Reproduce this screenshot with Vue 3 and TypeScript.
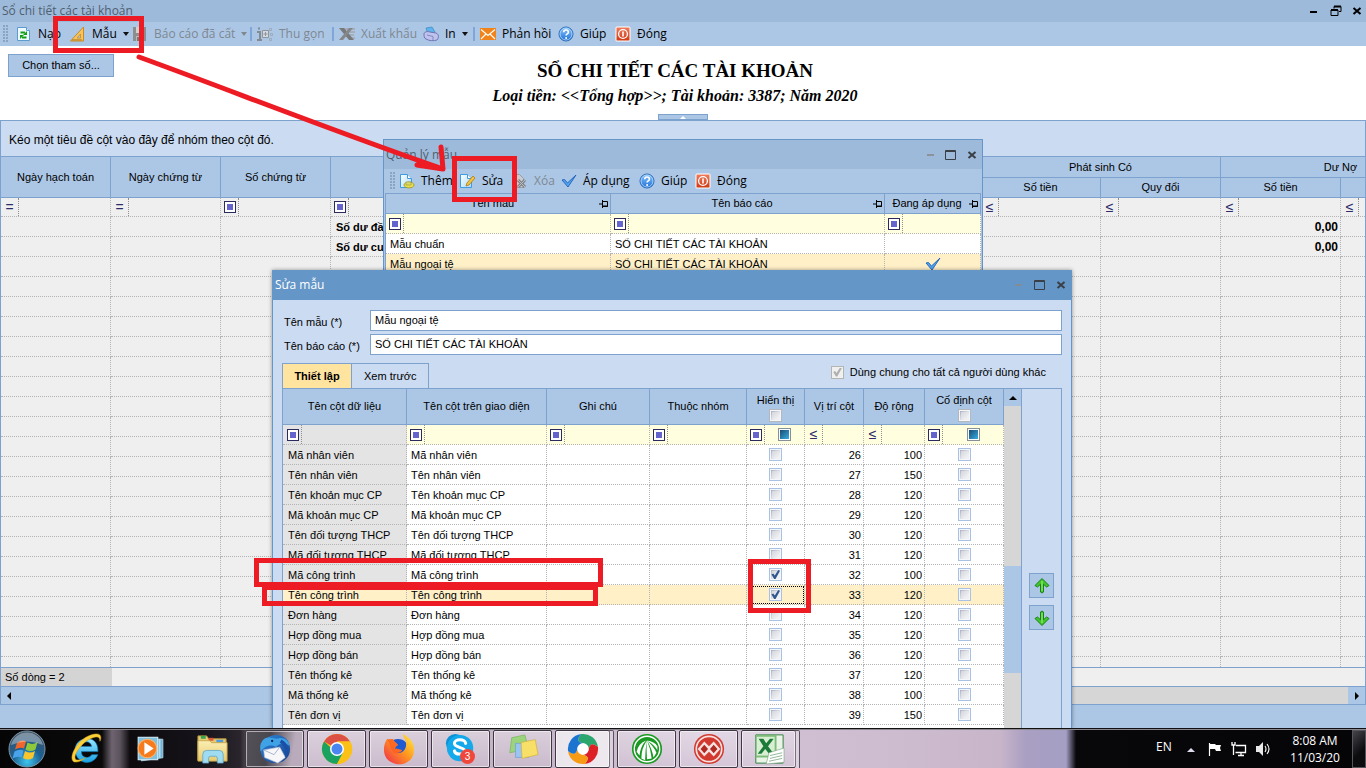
<script setup lang="ts">
interface Tool {
  icon: string
  label: string
  width: number
  menu?: boolean
  off?: boolean
  sep?: boolean
}

const mainTools: Tool[] = [
  { icon: 'refresh', label: 'Nạp', width: 54 },
  { icon: 'ruler', label: 'Mẫu', width: 62, menu: true },
  { icon: 'save', label: 'Báo cáo đã cất', width: 125, menu: true, off: true, sep: true },
  { icon: 'tree', label: 'Thu gọn', width: 82, off: true, sep: true },
  { icon: 'excel', label: 'Xuất khẩu', width: 84, off: true },
  { icon: 'printer', label: 'In', width: 57, menu: true, sep: true },
  { icon: 'mail', label: 'Phản hồi', width: 78 },
  { icon: 'help', label: 'Giúp', width: 57 },
  { icon: 'power', label: 'Đóng', width: 60 },
]

const managerTools: Tool[] = [
  { icon: 'add', label: 'Thêm', width: 61 },
  { icon: 'edit', label: 'Sửa', width: 52 },
  { icon: 'delete', label: 'Xóa', width: 49, off: true },
  { icon: 'tick', label: 'Áp dụng', width: 78 },
  { icon: 'help', label: 'Giúp', width: 56 },
  { icon: 'power', label: 'Đóng', width: 60 },
]

const ledgerFilters = ['=', '=', 'box', 'box', '≤', '≤', '≤', '≤']
const ledgerRows: { text: string; amount: string }[] = [
  { text: 'Số dư đầu kỳ', amount: '0,00' },
  { text: 'Số dư cuối kỳ', amount: '0,00' },
  ...Array.from({ length: 30 }, () => ({ text: '', amount: '' })),
]

const templates = [
  { name: 'Mẫu chuẩn', report: 'SỔ CHI TIẾT CÁC TÀI KHOẢN', active: false },
  { name: 'Mẫu ngoại tệ', report: 'SỔ CHI TIẾT CÁC TÀI KHOẢN', active: true },
]

interface Column {
  name: string
  pos: number
  width: number
  shown?: boolean
  current?: boolean
}

const columns: Column[] = [
  { name: 'Mã nhân viên', pos: 26, width: 100 },
  { name: 'Tên nhân viên', pos: 27, width: 150 },
  { name: 'Tên khoản mục CP', pos: 28, width: 120 },
  { name: 'Mã khoản mục CP', pos: 29, width: 120 },
  { name: 'Tên đối tượng THCP', pos: 30, width: 120 },
  { name: 'Mã đối tượng THCP', pos: 31, width: 120 },
  { name: 'Mã công trình', pos: 32, width: 100, shown: true },
  { name: 'Tên công trình', pos: 33, width: 120, shown: true, current: true },
  { name: 'Đơn hàng', pos: 34, width: 120 },
  { name: 'Hợp đồng mua', pos: 35, width: 120 },
  { name: 'Hợp đồng bán', pos: 36, width: 120 },
  { name: 'Tên thống kê', pos: 37, width: 120 },
  { name: 'Mã thống kê', pos: 38, width: 100 },
  { name: 'Tên đơn vị', pos: 39, width: 150 },
]

const pinned = [
  { icon: 'ie', label: 'Internet Explorer' },
  { icon: 'wmp', label: 'Windows Media Player' },
  { icon: 'folder', label: 'Windows Explorer' },
]
const running = [
  { icon: 'thunderbird', label: 'Thunderbird', cls: 'first', badge: '' },
  { icon: 'chrome', label: 'Chrome', cls: '', badge: '' },
  { icon: 'firefox', label: 'Firefox', cls: '', badge: '' },
  { icon: 'skype', label: 'Skype', cls: '', badge: '3' },
  { icon: 'notes', label: 'Sticky Notes', cls: '', badge: '' },
  { icon: 'swirl', label: 'Browser', cls: 'stack lit', badge: '' },
  { icon: 'palm', label: 'Palm', cls: '', badge: '' },
  { icon: 'misa', label: 'MISA', cls: '', badge: '' },
  { icon: 'xls', label: 'Excel', cls: 'stack', badge: '' },
]
</script>

<template>
  <svg class="defs" aria-hidden="true">
    <defs>
      <linearGradient id="gBlue" x1="0" y1="0" x2="0" y2="1"><stop offset="0" stop-color="#8cc8ff" /><stop offset="1" stop-color="#1c6fd6" /></linearGradient>
      <linearGradient id="gRed" x1="0" y1="0" x2="0" y2="1"><stop offset="0" stop-color="#ef7b5c" /><stop offset="1" stop-color="#cf3a14" /></linearGradient>
      <linearGradient id="gPage" x1="0" y1="0" x2="1" y2="1"><stop offset="0" stop-color="#ffffff" /><stop offset="1" stop-color="#a9d8f7" /></linearGradient>
      <radialGradient id="gOrb" cx=".5" cy=".85" r=".8"><stop offset="0" stop-color="#3fc6ee" /><stop offset=".5" stop-color="#1c5f92" /><stop offset="1" stop-color="#3c566b" /></radialGradient>
      <linearGradient id="gIe" x1="0" y1="0" x2="0" y2="1"><stop offset="0" stop-color="#9be6ff" /><stop offset="1" stop-color="#18a3e6" /></linearGradient>
      <linearGradient id="gFold" x1="0" y1="0" x2="0" y2="1"><stop offset="0" stop-color="#fbeeb4" /><stop offset="1" stop-color="#e8cb70" /></linearGradient>
      <linearGradient id="gFox" x1="1" y1="0" x2="0" y2="1"><stop offset="0" stop-color="#fff14a" /><stop offset=".45" stop-color="#ff9a1f" /><stop offset="1" stop-color="#f0254f" /></linearGradient>
      <linearGradient id="gTb" x1="0" y1="0" x2="1" y2="1"><stop offset="0" stop-color="#2a86d8" /><stop offset="1" stop-color="#1b3f8f" /></linearGradient>
    </defs>
    <symbol id="i-refresh" viewBox="0 0 16 16">
      <path d="M1.500 1.500h9l3 3v10h-12z" fill="#eef8ff" stroke="#5c9ccc" />
      <path d="M10.500 1.500v3h3" fill="#cfe6f7" stroke="#5c9ccc" />
      <path d="M4.500 6.500h4.500M6 11.500h4.500" fill="none" stroke="#12a012" stroke-width="2" />
      <path d="M7 9h4V5zM8 9H4v4z" fill="#12a012" />
    </symbol>
    <symbol id="i-ruler" viewBox="0 0 16 16">
      <path d="M13.500 1v14H.500z" fill="#f7c35c" stroke="#c98a22" />
      <path d="M10.500 8v4H7z" fill="#acc7e6" stroke="#c98a22" stroke-width=".8" />
      <path d="M3 14.500v-1.500M5 14.500v-1.500M7 14.500v-1.500M9 14.500v-1.500M11 14.500v-1.500" stroke="#8a5a10" stroke-width=".8" />
    </symbol>
    <symbol id="i-save" viewBox="0 0 16 16">
      <path d="M1 1h13v14H1z" fill="#8d8d8d" />
      <path d="M4 1h7v6H4z" fill="#d2d2d2" />
      <path d="M4 10h8v5H4z" fill="#b9b9b9" />
      <path d="M5 11h2v4H5z" fill="#777" />
    </symbol>
    <symbol id="i-tree" viewBox="0 0 16 16">
      <path d="M0 6h3v8M0 14h5M1 2.500h2" fill="none" stroke="#868b92" stroke-width="2" />
      <path d="M5.500 4.500h6v7h-6zM6.500 8h4M8.500 6v4" fill="#d5dae0" stroke="#8f959d" />
      <path d="M12.500 2.500h2v2h-2zM13.500 7.500h2v2h-2zM12.500 12.500h2v2h-2z" fill="none" stroke="#9aa3ae" stroke-width=".8" />
    </symbol>
    <symbol id="i-excel" viewBox="0 0 16 16">
      <path d="M5 3h11M8 6h8M9 9h6M9 12h7" stroke="#a3a6aa" stroke-width="1.300" />
      <path d="M0 2h5l10 12h-5z" fill="#77797c" />
      <path d="M14 2h-4L0 14h4z" fill="#85878a" />
    </symbol>
    <symbol id="i-printer" viewBox="0 0 16 16">
      <path d="M3 2l6-1 3 5-7 2z" fill="#5fb4ea" stroke="#3d88c4" stroke-width=".7" />
      <path d="M1 8c0-2 3-3 6-2l6 1c3 1 3 5 1 7-3 1-8 1-11-1-2-1-2-3-2-5z" fill="#bfc3ec" stroke="#6e74b4" />
      <path d="M4 9l6 1.500v4" fill="none" stroke="#8187c4" />
    </symbol>
    <symbol id="i-mail" viewBox="0 0 16 16">
      <path d="M0 2h16v12H0z" fill="#f0831a" />
      <path d="M1 3.500l7 6 7-6M1 13l5-5M15 13l-5-5" fill="none" stroke="#fff" stroke-width="1.100" />
    </symbol>
    <symbol id="i-help" viewBox="0 0 16 16">
      <circle cx="8" cy="8" r="7" fill="url(#gBlue)" stroke="#2566b4" />
      <circle cx="8" cy="8" r="6" fill="none" stroke="#b7dcff" stroke-width=".8" />
      <path d="M5.700 6.300c0-3 4.700-3 4.700 0 0 1.600-2.300 1.700-2.300 3.300" fill="none" stroke="#fff" stroke-width="1.600" />
      <circle cx="8.100" cy="12" r="1" fill="#fff" />
    </symbol>
    <symbol id="i-power" viewBox="0 0 16 16">
      <rect x=".5" y=".5" width="15" height="15" rx="1.500" fill="#fff" />
      <rect x="1.500" y="1.500" width="13" height="13" fill="url(#gRed)" />
      <circle cx="8" cy="8" r="4.400" fill="none" stroke="#fff" stroke-width="1.300" />
      <path d="M8 5.500v5" stroke="#fff" stroke-width="1.600" />
    </symbol>
    <symbol id="i-add" viewBox="0 0 16 16">
      <path d="M1.500 1.500h7l4 4v9h-11z" fill="url(#gPage)" stroke="#3f9be0" />
      <path d="M8.500 1.500v4h4" fill="#fff" stroke="#3f9be0" />
      <ellipse cx="10" cy="12" rx="5" ry="3" fill="#e8e04a" stroke="#9a942a" stroke-width=".8" />
      <path d="M7 9h5v3H7z" fill="#d8dc7a" stroke="#9a942a" stroke-width=".6" />
    </symbol>
    <symbol id="i-edit" viewBox="0 0 16 16">
      <path d="M.500 1.500h7l4 4v9H.500z" fill="url(#gPage)" stroke="#3f9be0" />
      <path d="M7.500 1.500v4h4" fill="#fff" stroke="#3f9be0" />
      <path d="M6 13l1-3 6-7 2 2-6 7z" fill="#f5c63c" stroke="#a97b1c" stroke-width=".8" />
    </symbol>
    <symbol id="i-delete" viewBox="0 0 16 16">
      <path d="M1.500 1.500h6l4 4v9h-10z" fill="#c8cbd0" stroke="#9a9da2" />
      <path d="M6 7l7 7M13 7l-7 7" stroke="#808388" stroke-width="3" />
      <path d="M6 7l7 7M13 7l-7 7" stroke="#b9bcc0" stroke-width="1" />
    </symbol>
    <symbol id="i-tick" viewBox="0 0 16 16">
      <path d="M1 7l2.500-.500L6.500 10 15 2 7 14z" fill="#54a4f0" stroke="#1a60b8" stroke-width=".9" />
    </symbol>
    <symbol id="i-up" viewBox="0 0 18 18">
      <path d="M9 1.500l7 7-2.500 1.500-3-2.800V15q-1.500 2-3 0V7.200L4.500 10 2 8.500z" fill="#42c72a" stroke="#17801a" />
      <path d="M9 4v10" stroke="#a5f07a" />
    </symbol>

    <symbol id="i-start" viewBox="0 0 38 38">
      <circle cx="19" cy="19" r="18" fill="url(#gOrb)" stroke="#7f95a5" />
      <path d="M9 13q5-4 9-1.500l-2 7q-4-2-9 1z" fill="#f0652a" />
      <path d="M19.500 12.500q5 3 10-.500l-2 7.500q-5 3-10 0z" fill="#90c83c" />
      <path d="M6.500 21.500q5-3 9-1l-2 7q-4-2-9 1z" fill="#4aa3e8" />
      <path d="M17 21q5 3 10 0l-2 7q-5 3-10 0z" fill="#fbc52e" />
      <path d="M3 15a16.500 16.500 0 0 1 32 0Q19 8 3 15z" fill="#fff" opacity=".35" />
    </symbol>
    <symbol id="i-ie" viewBox="0 0 32 32">
      <path d="M27 19H11c0 7 8 7 10 3h6C22 34 5 31 5 17 5 4 28 1 27 19zM11 14h10c-1-6-9-6-10 0z" fill="url(#gIe)" stroke="#1480c0" stroke-width=".6" />
      <path d="M4 29C-3 26 8 4 24 2c6-1 7 3 5 7 0-3-1-5-5-4C13 7 1 24 6 27q5 1 9-2-6 5-11 4z" fill="#fbd13a" stroke="#d49a14" stroke-width=".5" />
    </symbol>
    <symbol id="i-wmp" viewBox="0 0 32 32">
      <path d="M8 6l21 1v18l-21 3z" fill="#6fb4d8" stroke="#c4e3f2" stroke-width=".7" />
      <path d="M5 5h19v22H5z" fill="#7fc0df" stroke="#d6eef9" />
      <path d="M26 7v18" stroke="#d6eef9" />
      <circle cx="14" cy="16" r="9" fill="#f57b1c" stroke="#fbb36a" />
      <path d="M11 10v12l9-6z" fill="#fff" />
    </symbol>
    <symbol id="i-folder" viewBox="0 0 34 34">
      <path d="M2 4h9l2 3h18v22H2z" fill="#e7ca72" stroke="#b6953e" />
      <path d="M5 4h5v3H5z" fill="#35a551" /><path d="M13 6h5v3h-5z" fill="#dc5a36" /><path d="M21 8h7v3h-7z" fill="#4a9be0" />
      <path d="M2 9h12l2 2h16v19H2z" fill="url(#gFold)" stroke="#c9a94f" />
      <path d="M7 32v-9q0-4 4-4h13q4 0 4 4v9h-6v-5q0-2-2-2h-5q-2 0-2 2v5z" fill="#9fdcf2" stroke="#5aa5c8" stroke-width=".8" />
    </symbol>
    <symbol id="i-thunderbird" viewBox="0 0 34 34">
      <path d="M9 5C17-1 33 2 33 17c0 10-8 15-16 15C7 32 1 25 2 17c1-5 3-9 7-12z" fill="url(#gTb)" />
      <path d="M2 20C-1 12 5 3 12 5l7 1c7-2 12 1 14 8-6-5-12-3-15 1-4-3-12-2-16 5z" fill="#3fa2e6" />
      <path d="M5 18l17-3 6 11-8 6-14-6z" fill="#f7f7fa" stroke="#b6bfd2" stroke-width=".7" />
      <path d="M5 18l11 5 6-8" fill="none" stroke="#a4b0c8" />
      <path d="M24 7c8 4 9 14 4 20 1-8-1-14-6-17z" fill="#1b4fa6" />
      <circle cx="14" cy="8.500" r="1.200" fill="#0c2352" />
    </symbol>
    <symbol id="i-chrome" viewBox="0 0 32 32">
      <circle cx="16" cy="16" r="15" fill="#fbc116" />
      <path d="M16 16L3 8.500A15 15 0 0 1 29 8.500H16z" fill="#dd5144" />
      <path d="M3 8.500A15 15 0 0 0 16 31l6-11.500-6 .500z" fill="#1aa260" />
      <path d="M16 8.500h13.200a15 15 0 0 1-13.200 22.500l6.500-11z" fill="#fbc116" />
      <circle cx="16" cy="16" r="7" fill="#fff" /><circle cx="16" cy="16" r="5.500" fill="#4a86f0" />
    </symbol>
    <symbol id="i-firefox" viewBox="0 0 32 32">
      <circle cx="15" cy="17" r="11" fill="#1f5ad0" />
      <path d="M20 1c0 4 3 5 3 9 1 7-5 12-10 9 3 1 6-1 6-2-3 0-4-2-7-1 0-2 1-3 3-4-1-2-4-3-5-6C7 6 6 7 4 6c-5 8-4 19 4 23 10 6 24 0 23-13 0-7-5-12-11-15z" fill="url(#gFox)" />
      <path d="M4 6c2 1 3 0 6 0 1 3 4 4 5 6-2 1-3 2-3 4 3-1 4 1 7 1-1 3-6 5-9 2-3-4-3-9-6-13z" fill="#ff5a1f" opacity=".7" />
    </symbol>
    <symbol id="i-skype" viewBox="0 0 34 34">
      <circle cx="11" cy="11" r="10" fill="#0b93d6" /><circle cx="16" cy="16" r="14" fill="#14a9ea" />
      <path d="M22 11c-1-5-12-5-12 0s11 4 11 8-10 5-11 0" fill="none" stroke="#fff" stroke-width="3.200" stroke-linecap="round" />
    </symbol>
    <symbol id="i-notes" viewBox="0 0 34 34">
      <path d="M5 5l14-3 4 15-20 4z" fill="#9bd47c" stroke="#76b157" stroke-width=".7" />
      <path d="M9 11h14v15H9z" fill="#9ac4f2" stroke="#6f9ed0" stroke-width=".7" />
      <path d="M15 10l15-3 3 16-17 4z" fill="#f7df68" stroke="#cfae3a" stroke-width=".7" />
    </symbol>
    <symbol id="i-swirl" viewBox="0 0 34 34">
      <path id="blade" d="M15 1.100A16 16 0 0 1 32.900 15Q25 8 23 17A6 6 0 0 0 17 11Q8 9 15 1.100z" fill="#2aa66e" />
      <path d="M15 1.100A16 16 0 0 1 32.900 15Q25 8 23 17A6 6 0 0 0 17 11Q8 9 15 1.100z" fill="#dc2026" transform="rotate(90 17 17)" />
      <path d="M15 1.100A16 16 0 0 1 32.900 15Q25 8 23 17A6 6 0 0 0 17 11Q8 9 15 1.100z" fill="#f79a14" transform="rotate(180 17 17)" />
      <path d="M15 1.100A16 16 0 0 1 32.900 15Q25 8 23 17A6 6 0 0 0 17 11Q8 9 15 1.100z" fill="#1a74d0" transform="rotate(270 17 17)" />
      <circle cx="17" cy="17" r="6" fill="#fff" />
    </symbol>
    <symbol id="i-palm" viewBox="0 0 34 34">
      <circle cx="17" cy="17" r="16" fill="#1a9a22" /><circle cx="17" cy="17" r="13.500" fill="none" stroke="#fff" stroke-width="1.500" />
      <path d="M6 20q2-9 10-12-6 6-7 16zM11 27q0-11 6-19-2 10-2 21zM17 28q-1-11 0-20 4 9 5 19zM24 26q-2-10-7-18 7 6 10 13zM28 18q-4-6-11-10 8 1 11 6z" fill="#fff" />
    </symbol>
    <symbol id="i-misa" viewBox="0 0 34 34">
      <circle cx="17" cy="17" r="16" fill="#d23a30" /><circle cx="17" cy="17" r="13.500" fill="none" stroke="#f6e2e0" stroke-width="1.800" />
      <path d="M5 17l7-8 5 5 5-5 7 8-7 8-5-5-5 5z" fill="#f6e2e0" />
      <path d="M8 17l4-4.500 4 4.500-4 4.500zM18 17l4-4.500 4 4.500-4 4.500z" fill="#b12a22" />
    </symbol>
    <symbol id="i-xls" viewBox="0 0 34 34">
      <path d="M3 2h29v30H3z" fill="#e9f4e6" stroke="#2c7d3c" />
      <path d="M3 2h22v24H3z" fill="#7dbb78" /><path d="M4 4h19v20H4z" fill="#d9efd4" />
      <path d="M6 6h5l3 5 4-5h4l-6 8 6 8h-5l-4-5-4 5H5l6-8z" fill="#1d7b38" />
      <path d="M17 21l16-5v15l-19 2z" fill="#fff" stroke="#7ea583" stroke-width=".7" />
      <path d="M18 24l13-3M18 27l13-3M17 30l14-3" stroke="#8fb394" />
    </symbol>
  </svg>

  <div class="screen">
    <main class="desk">
      <header class="caption main-caption">
        <span>Sổ chi tiết các tài khoản</span>
        <div class="winbtns dark">
          <button aria-label="Thu nhỏ"><svg viewBox="0 0 12 12"><path d="M1 7h7" stroke-width="2" /></svg></button>
          <button aria-label="Khôi phục"><svg viewBox="0 0 12 12"><path d="M4 3.500V1.500h7v5H9M1 5h7v5.500H1z" fill="none" /><path d="M4 1.500h7M1 5h7" stroke-width="2" /></svg></button>
          <button aria-label="Đóng"><svg viewBox="0 0 12 12"><path d="M2.500 3l7 6M9.500 3l-7 6" stroke-width="2" /></svg></button>
        </div>
      </header>
      <nav class="toolbar main-toolbar">
        <span class="grip"></span>
        <button v-for="t in mainTools" :key="t.label" class="tool" :class="{ off: t.off, sep: t.sep }" :disabled="t.off" :style="{ width: t.width + 'px' }">
          <svg class="ico"><use :href="'#i-' + t.icon" /></svg><span>{{ t.label }}</span><i v-if="t.menu" class="caret"></i>
        </button>
      </nav>

      <section class="report-head">
        <button class="param">Chọn tham số...</button>
        <div class="headings">
          <h1>SỔ CHI TIẾT CÁC TÀI KHOẢN</h1>
          <h2>Loại tiền: &lt;&lt;Tổng hợp&gt;&gt;; Tài khoản: 3387; Năm 2020</h2>
        </div>
        <button class="collapse" aria-label="Thu gọn phần đầu"><i></i></button>
      </section>

      <section class="ledger">
        <p class="group-hint">Kéo một tiêu đề cột vào đây để nhóm theo cột đó.</p>
        <div class="ledger-body">
          <table class="grid">
            <colgroup>
              <col class="w110" /><col class="w110" /><col class="w110" /><col /><col class="w120" /><col class="w120" /><col class="w120" /><col class="w120" />
            </colgroup>
            <thead>
              <tr class="band">
                <th rowspan="2">Ngày hạch toán</th><th rowspan="2">Ngày chứng từ</th><th rowspan="2">Số chứng từ</th><th rowspan="2"></th>
                <th colspan="2">Phát sinh Có</th><th colspan="2">Dư Nợ</th>
              </tr>
              <tr class="subband"><th>Số tiền</th><th>Quy đổi</th><th>Số tiền</th><th></th></tr>
            </thead>
            <tbody>
              <tr class="filter">
                <td v-for="(f, i) in ledgerFilters" :key="i">
                  <div class="fcell"><span class="op"><i v-if="f === 'box'" class="opbox"></i><template v-else>{{ f }}</template></span><input type="text" :aria-label="'Lọc cột ' + (i + 1)" /></div>
                </td>
              </tr>
              <tr v-for="(r, i) in ledgerRows" :key="i">
                <td></td><td></td><td></td><td class="strong">{{ r.text }}</td><td></td><td></td><td class="strong num sum">{{ r.amount }}</td><td></td>
              </tr>
            </tbody>
          </table>
        </div>
        <div class="count"><span>Số dòng = 2</span></div>
        <div class="hscroll"><span class="thumb"><i class="left"></i></span><span class="end"><i class="right"></i></span></div>
      </section>
      <div class="status"></div>

      <section class="window manager" aria-label="Quản lý mẫu">
        <header class="caption">
          <span>Quản lý mẫu</span>
          <div class="winbtns">
            <button aria-label="Thu nhỏ"><svg viewBox="0 0 12 12"><path d="M3 6h7" stroke="#8b9299" stroke-width="2" /></svg></button>
            <button aria-label="Phóng to"><svg viewBox="0 0 12 12"><path d="M.500 1.500h10v9H.500zM.500 2.500h10" fill="none" /></svg></button>
            <button aria-label="Đóng"><svg viewBox="0 0 12 12"><path d="M2.500 3l7 6M9.500 3l-7 6" stroke-width="2" /></svg></button>
          </div>
        </header>
        <nav class="toolbar">
          <span class="grip"></span>
          <button v-for="t in managerTools" :key="t.label" class="tool" :class="{ off: t.off }" :disabled="t.off" :style="{ width: t.width + 'px' }">
            <svg class="ico"><use :href="'#i-' + t.icon" /></svg><span>{{ t.label }}</span>
          </button>
        </nav>
        <table class="grid">
          <colgroup><col class="w225" /><col /><col class="w96" /></colgroup>
          <thead>
            <tr>
              <th v-for="h in ['Tên mẫu', 'Tên báo cáo', 'Đang áp dụng']" :key="h">
                <div class="pinned-th"><span>{{ h }}</span><svg viewBox="0 0 10 8"><path d="M0 4h3M3.500 0v8M3.500 1.500h5v5h-5" fill="none" stroke="#000" /><path d="M4 6h5" stroke="#000" /></svg></div>
              </th>
            </tr>
          </thead>
          <tbody>
            <tr class="filter">
              <td v-for="i in 3" :key="i"><div class="fcell"><span class="op"><i class="opbox"></i></span><input type="text" :aria-label="'Lọc ' + i" /></div></td>
            </tr>
            <tr v-for="t in templates" :key="t.name" :class="{ current: t.active }">
              <td>{{ t.name }}</td><td>{{ t.report }}</td><td class="mid"><svg v-if="t.active" class="ico"><use href="#i-tick" /></svg></td>
            </tr>
          </tbody>
        </table>
      </section>

      <section class="window editor" aria-label="Sửa mẫu">
        <header class="caption active">
          <span>Sửa mẫu</span>
          <div class="winbtns">
            <button aria-label="Thu nhỏ" disabled><svg viewBox="0 0 12 12"><path d="M2 6h7" stroke="#7f8c99" stroke-width="2" /></svg></button>
            <button aria-label="Phóng to"><svg viewBox="0 0 12 12"><path d="M.500 1.500h10v9H.500zM.500 2.500h10" fill="none" /></svg></button>
            <button aria-label="Đóng"><svg viewBox="0 0 12 12"><path d="M2.500 3l7 6M9.500 3l-7 6" stroke-width="2" /></svg></button>
          </div>
        </header>
        <div class="editor-body">
          <div class="field"><label for="tplName">Tên mẫu (*)</label><input id="tplName" type="text" value="Mẫu ngoại tệ" /></div>
          <div class="field"><label for="repName">Tên báo cáo (*)</label><input id="repName" type="text" value="SỔ CHI TIẾT CÁC TÀI KHOẢN" /></div>
          <div class="tabs" role="tablist">
            <button class="tab on" role="tab" aria-selected="true">Thiết lập</button>
            <button class="tab" role="tab" aria-selected="false">Xem trước</button>
            <label class="share"><input type="checkbox" class="cb grey" checked disabled />Dùng chung cho tất cả người dùng khác</label>
          </div>
          <div class="pane">
            <div class="cols">
              <table class="grid">
                <colgroup><col class="w124" /><col class="w140" /><col /><col class="w97" /><col class="w58" /><col class="w59" /><col class="w61" /><col class="w79" /></colgroup>
                <thead>
                  <tr>
                    <th>Tên cột dữ liệu</th><th>Tên cột trên giao diện</th><th>Ghi chú</th><th>Thuộc nhóm</th>
                    <th><label class="allbox">Hiển thị<input type="checkbox" class="cb" /></label></th>
                    <th>Vị trí cột</th><th>Độ rộng</th>
                    <th><label class="allbox">Cố định cột<input type="checkbox" class="cb" /></label></th>
                  </tr>
                </thead>
                <tbody>
                  <tr class="filter">
                    <td v-for="i in 8" :key="i">
                      <div class="fcell">
                        <span class="op"><template v-if="i === 6 || i === 7">≤</template><i v-else class="opbox"></i></span>
                        <span v-if="i === 5 || i === 8" class="tri"><input type="checkbox" class="cb mixed" :aria-label="'Lọc ' + i" /></span>
                        <input v-else type="text" :aria-label="'Lọc ' + i" />
                      </div>
                    </td>
                  </tr>
                  <tr v-for="c in columns" :key="c.pos" :class="{ current: c.current }">
                    <td>{{ c.name }}</td><td>{{ c.name }}</td><td></td><td></td>
                    <td class="mid" :class="{ focus: c.current }"><input type="checkbox" class="cb" :checked="c.shown" :aria-label="'Hiển thị ' + c.name" /></td>
                    <td class="num">{{ c.pos }}</td><td class="num">{{ c.width }}</td>
                    <td class="mid"><input type="checkbox" class="cb" :aria-label="'Cố định ' + c.name" /></td>
                  </tr>
                </tbody>
              </table>
            </div>
            <div class="vscroll"><span class="top"><i></i></span><span class="thumb"></span></div>
            <div class="movers">
              <button aria-label="Lên"><svg><use href="#i-up" /></svg></button>
              <button aria-label="Xuống" class="down"><svg><use href="#i-up" /></svg></button>
            </div>
          </div>
        </div>
      </section>
    </main>

    <footer class="taskbar">
      <button class="start" aria-label="Start"><svg><use href="#i-start" /></svg></button>
      <button v-for="p in pinned" :key="p.icon" class="pin" :aria-label="p.label"><svg><use :href="'#i-' + p.icon" /></svg></button>
      <div class="apps">
        <button v-for="a in running" :key="a.icon" class="app" :class="a.cls" :aria-label="a.label"><svg><use :href="'#i-' + a.icon" /></svg><span v-if="a.badge" class="badge">{{ a.badge }}</span></button>
      </div>
      <div class="tray">
        <span class="lang">EN</span>
        <i class="more"></i>
        <svg class="t" viewBox="0 0 16 16"><path d="M2.500 2v13" stroke="#fff" stroke-width="1.200" /><path d="M3 3h5l1 1h5l-1 3 1 3H9L8 8H3z" fill="#fff" /></svg>
        <svg class="t" viewBox="0 0 16 16"><path d="M5 4.500h9.500v7H4.500M7 14.500h6M10 12v2M1 1v3h3V1M2.500 4v10" fill="none" stroke="#fff" stroke-width="1.300" /></svg>
        <svg class="t" viewBox="0 0 16 16"><path d="M1 5h3l4-4v14l-4-4H1z" fill="#e8e8e8" /><path d="M10 5q2 3 0 6M12 3q4 5 0 10" fill="none" stroke="#fff" stroke-width="1.100" /></svg>
        <div class="clock"><span>8:08 AM</span><span>11/03/20</span></div>
        <button class="peek" aria-label="Show desktop"></button>
      </div>
    </footer>

    <svg class="marks" aria-hidden="true">
      <g fill="none" stroke="#ed1c24" stroke-width="5">
        <rect x="55.500" y="18.500" width="86" height="32" />
        <rect x="454.500" y="158.500" width="60" height="41" />
        <rect x="256.500" y="560.500" width="344" height="24" />
        <rect x="264.500" y="587.500" width="331" height="16" />
        <rect x="750.500" y="561.500" width="58" height="49" />
        <path d="M139 57C230 90 330 130 443 169M441 147l2 22M417 165l26 4" stroke-linecap="round" stroke-linejoin="round" />
      </g>
    </svg>
  </div>
</template>

<style>
body { overflow: hidden; }
</style>

<style scoped>
.defs { position: absolute; width: 0; height: 0; }
* { box-sizing: border-box; }
button, input { font: inherit; color: inherit; margin: 0; padding: 0; border: 0; background: none; border-radius: 0; }
p, h1, h2 { margin: 0; }
.screen {
  position: relative; display: flex; flex-direction: column; height: 100vh; overflow: hidden;
  font: 11px/19px "Liberation Sans", Arial, sans-serif; color: #000; background: #acc7e6;
}
.desk { flex: 1; min-height: 0; position: relative; display: flex; flex-direction: column; overflow: hidden; }

.caption {
  display: flex; align-items: center; justify-content: space-between; flex: none; height: 29px; padding: 0 4px 0 2px;
  background: #9dbada; color: #4f5f70; font: 12px/16px "Open Sans", "Noto Sans", sans-serif;
}
.main-caption { height: 22px; padding-right: 3px; }
.caption.active { height: 30px; background: #6496c8; color: #fff; }
.winbtns { display: flex; gap: 9px; }
.winbtns svg { display: block; width: 12px; height: 12px; stroke: #3a3f45; }
.winbtns.dark svg { stroke: #000; }

.toolbar { display: flex; align-items: center; flex: none; height: 24px; background: #acc7e6; font: 12px/16px "Open Sans", "Noto Sans", sans-serif; }
.grip { flex: none; width: 5px; height: 18px; margin: 0 6px 0 3px; background: radial-gradient(circle at 1px 1px, #8aa3c4 1px, transparent 1px) 0 0 / 3px 3px; }
.main-toolbar .grip { margin-right: 8px; }
.tool { position: relative; flex: none; display: flex; align-items: center; white-space: nowrap; height: 20px; text-align: left; }
.tool span { margin-left: 6px; }
.tool.off { color: #7f8790; }
.tool.sep::after { content: ""; position: absolute; right: 5px; top: 3px; height: 14px; width: 2px; background: #7fa6d8; }
.ico { flex: none; width: 16px; height: 16px; }
.caret { margin-left: 6px; border: 3px solid transparent; border-top: 4px solid #111; border-bottom: 0; }
.off .caret { border-top-color: #7f8790; }

.report-head { position: relative; flex: none; height: 74px; padding: 8px; background: #fff; display: flex; align-items: flex-start; }
.param { flex: none; width: 106px; height: 23px; border: 1px solid #7da2ce; background: #acc7e6; line-height: 21px; }
.headings { position: absolute; inset: 13px 0 auto 0; margin-right: 16px; text-align: center; font-family: "Liberation Serif", "Times New Roman", serif; }
h1 { font-size: 19px; line-height: 23px; }
h2 { font-size: 16px; line-height: 20px; font-style: italic; margin-top: 4px; }
.collapse { position: absolute; bottom: 0; left: 50%; margin-left: -25px; width: 50px; height: 6px; border: 1px solid #7da2ce; background: #acc7e6; display: flex; justify-content: center; }
.collapse i { border: 3px solid transparent; border-bottom: 3px solid #fff; border-top: 0; margin-top: 1px; }

.ledger { flex: 1; min-height: 0; display: flex; flex-direction: column; border: 1px solid #7da2ce; background: #efefef; }
.group-hint { flex: none; height: 36px; padding-left: 8px; font-size: 12px; line-height: 38px; background: #cbdbf1; border-bottom: 1px solid #7da2ce; }
.ledger-body { flex: 1; min-height: 0; overflow: hidden; }
.ledger-body .grid { width: calc(100% + 96px); }
.count { flex: none; height: 20px; border-top: 1px solid #7da2ce; border-bottom: 1px solid #7da2ce; background: #efefef; line-height: 18px; }
.count span { display: block; width: 111px; padding-left: 4px; background: #d4d4d4; }
.hscroll { flex: none; display: flex; justify-content: space-between; height: 17px; background: #d6d6d6; }
.hscroll span { display: flex; align-items: center; background: #acc7e6; }
.hscroll .thumb { width: 60%; padding-left: 6px; }
.hscroll .end { width: 17px; padding-left: 7px; }
.left, .right { border: 4px solid transparent; }
.left { border-right-color: #000; border-left: 0; }
.right { border-left-color: #000; border-right: 0; }
.status { flex: none; height: 23px; }

.grid { table-layout: fixed; width: 100%; border-spacing: 0; }
.grid th { padding: 0; font-weight: normal; text-align: center; background: #acc7e6; border-right: 1px solid #7da2ce; border-bottom: 1px solid #7da2ce; }
.grid td { height: 20px; padding: 2px 4px 0; line-height: 17px; border-right: 1px dotted #b4b4b4; border-bottom: 1px dotted #b4b4b4; white-space: nowrap; overflow: hidden; }
.grid .filter td { padding: 0; }
.ledger .filter td { height: 19px; }
.ledger .fcell { height: 18px; }
.band th { height: 21px; }
.subband th { height: 20px; }
.strong { font-weight: bold; }
.ledger .strong { padding-left: 5px; padding-right: 2px; }
.grid .num { text-align: right; padding-right: 2px; }
.grid .sum { font-size: 12px; }
.grid .mid { text-align: center; padding: 0; line-height: 0; }
.w110 { width: 110px; } .w120 { width: 120px; } .w225 { width: 225px; } .w96 { width: 96px; }
.w124 { width: 124px; } .w140 { width: 140px; } .w97 { width: 97px; } .w58 { width: 58px; } .w59 { width: 59px; } .w61 { width: 61px; } .w79 { width: 79px; }

.fcell { display: flex; height: 19px; }
.fcell input[type="text"] { flex: 1; min-width: 0; }
.op { flex: none; display: flex; align-items: center; justify-content: center; width: 18px; border-right: 1px dotted #8f8f8f; color: #2b2b6b; font-size: 14px; }
.opbox { width: 12px; height: 12px; border: 1px solid #2b2b5e; background: #6464cc; box-shadow: inset 0 0 0 2px #fff; }
.tri { flex: 1; display: flex; align-items: center; justify-content: center; }

.window { position: absolute; display: flex; flex-direction: column; border: 1px solid #6496c8; }
.manager { left: 383px; top: 139px; width: 600px; background: #acc7e6; }
.manager .caption { padding-right: 4px; }
.manager .grip { margin: 0 4px 0 6px; }
.manager .grid { width: calc(100% - 2px); margin: 0 1px; border-top: 1px solid #7da2ce; border-left: 1px solid #7da2ce; background: #fff; }
.manager .grid th { height: 20px; }
.manager .filter td, .editor .filter td { background: #ffffe0; }
.grid .current td { background: #fff0c8; }
.pinned-th { display: flex; align-items: center; padding: 0 1px 0 0; }
.pinned-th span { flex: 1; white-space: nowrap; }
.pinned-th svg { flex: none; width: 10px; height: 8px; }

.editor { left: 272px; top: 270px; bottom: 0; width: 800px; border-top: 0; border-bottom: 0; background: #cbdbf1; box-shadow: 0 0 4px rgba(0, 0, 0, .4); }
.editor-body { flex: 1; min-height: 0; display: flex; flex-direction: column; padding: 10px 9px 0; }
.field { flex: none; display: flex; height: 21px; margin-bottom: 3px; }
.field label { flex: none; width: 88px; padding: 3px 0 0 2px; }
.field input { flex: 1; min-width: 0; padding: 0 4px; border: 1px solid #7da2ce; background: #fff; }
.tabs { flex: none; display: flex; height: 25px; margin-top: 5px; }
.tab { height: 25px; padding: 0 12px; border: 1px solid #7da2ce; border-bottom: 0; }
.tab + .tab { border-left: 0; }
.tab.on { width: 70px; padding: 0; background: #ffe4a0; font-weight: bold; }
.share { display: flex; align-items: center; gap: 6px; height: 18px; margin-left: auto; margin-right: 16px; }
.pane { flex: 1; min-height: 0; display: flex; border: 1px solid #7da2ce; border-bottom: 0; }
.cols { flex: 1; min-width: 0; overflow: hidden; background: #fff; }
.cols th { height: 36px; }
.cols .grid td:first-child { padding-left: 5px; }
.cols .grid .filter td:first-child { padding-left: 1px; }
.cols .grid tr:not(.current) td:first-child { background: #e4e4e4; }
.allbox { display: flex; flex-direction: column; align-items: center; line-height: 16px; gap: 1px; }
.focus { outline: 1px dotted #000; outline-offset: -2px; }

.cb { appearance: none; flex: none; position: relative; display: inline-block; width: 13px; height: 13px; vertical-align: middle; border: 1px solid #a9c1e2; background: linear-gradient(135deg, #a9afbe, #eef0f3 70%) 50% / 9px 9px no-repeat #f4f6fa; }
.cb::before { content: ""; position: absolute; inset: 2px; background: linear-gradient(135deg, #d3d6dd, #f4f4f6); }
th .cb { border-color: #b4b7bb; }
.cb:checked::after { content: ""; position: absolute; inset: 1px; background: #2f568f; clip-path: polygon(5% 50%, 25% 38%, 42% 62%, 80% 0, 100% 8%, 50% 100%, 35% 100%); }
.cb.grey { background: #f0f0f0; border-color: #b4b4b4; }
.cb.grey::before { background: none; }
.cb.grey:checked::after { background: #b0b0b0; }
.cb.mixed { border-color: #85909a; background: linear-gradient(135deg, #1a4a74, #37aee0) 50% / 9px 9px no-repeat #fff; }
.cb.mixed::before { background: none; }

.vscroll { flex: none; display: flex; flex-direction: column; width: 17px; background: #d6d6d6; }
.vscroll .top { height: 17px; display: flex; align-items: center; justify-content: center; background: #acc7e6; margin-bottom: 160px; }
.vscroll .top i { border: 4px solid transparent; border-bottom: 4px solid #000; border-top: 0; }
.vscroll .thumb { height: 107px; background: #acc7e6; }
.movers { flex: none; width: 40px; padding: 184px 7px 0; display: flex; flex-direction: column; gap: 7px; border-left: 1px solid #7da2ce; }
.movers button { width: 25px; height: 25px; border: 1px solid #7da2ce; background: #acc7e6; display: flex; align-items: center; justify-content: center; }
.movers svg { width: 18px; height: 18px; }
.down svg { transform: rotate(180deg); }

.taskbar {
  flex: none; display: flex; align-items: center; height: 40px; border-top: 1px solid #111; box-shadow: inset 0 1px #8d8791;
  background: linear-gradient(90deg, #050505 0, #0b0a0b 102px, #6e6470 112px, #5b535d 120px, #0d0b0d 130px, #15131a 200px, #2a252c 240px, #a798a8 262px, #c9b8cb 290px, #c4b3c6 520px, #d3c3d6 700px, #cdbbd0 900px, #c8b5ca 1000px, #a99fc2 1026px, #a49fc4 1066px, #08080b 1076px, #050507 100%);
}
.start { flex: none; width: 54px; display: flex; justify-content: center; }
.start svg { width: 38px; height: 38px; }
.pin { flex: none; width: 62px; display: flex; justify-content: center; margin-left: 1px; }
.pin svg { width: 33px; height: 33px; }
.apps { flex: 1; display: flex; gap: 3px; padding-left: 2px; }
.app { position: relative; width: 59px; height: 38px; display: flex; align-items: center; justify-content: center; border: 1px solid #3f3843; border-radius: 2px; box-shadow: inset 0 0 0 1px rgba(255, 255, 255, .55); background: linear-gradient(rgba(255, 255, 255, .35), rgba(255, 255, 255, .08)); }
.app.first { background: linear-gradient(100deg, #55525a, #4a464e 40%, #b9abbb 80%); }
.app.lit { background: rgba(255, 255, 255, .65); }
.app.stack { width: 55px; margin-right: 4px; }
.app.stack::after { content: ""; position: absolute; left: 100%; top: -1px; width: 4px; height: 38px; border: 1px solid #5a525e; border-left: 0; border-radius: 0 2px 2px 0; background: rgba(255, 255, 255, .3); }
.app svg { width: 32px; height: 32px; }
.badge { position: absolute; right: 14px; bottom: 3px; width: 15px; height: 15px; border-radius: 50%; background: #f0473c; color: #fff; font-size: 10px; line-height: 15px; text-align: center; }
.tray { flex: none; display: flex; align-items: center; height: 38px; color: #fff; font: 12px/17px "Open Sans", "Noto Sans", sans-serif; }
.lang { width: 35px; margin-bottom: 4px; }
.more { margin-right: 12px; margin-top: 2px; border: 4px solid transparent; border-bottom: 4px solid #dde; border-top: 0; margin-left: -4px; }
.t { width: 16px; height: 16px; margin-right: 8px; }
.clock { display: flex; flex-direction: column; align-items: center; width: 62px; margin: 0 6px 0 5px; }
.peek { width: 14px; height: 38px; border: 1px solid #55555c; background: linear-gradient(135deg, #44444a, #0c0c0f 60%); }

.marks { position: absolute; inset: 0; width: 100%; height: 100%; pointer-events: none; }
</style>
